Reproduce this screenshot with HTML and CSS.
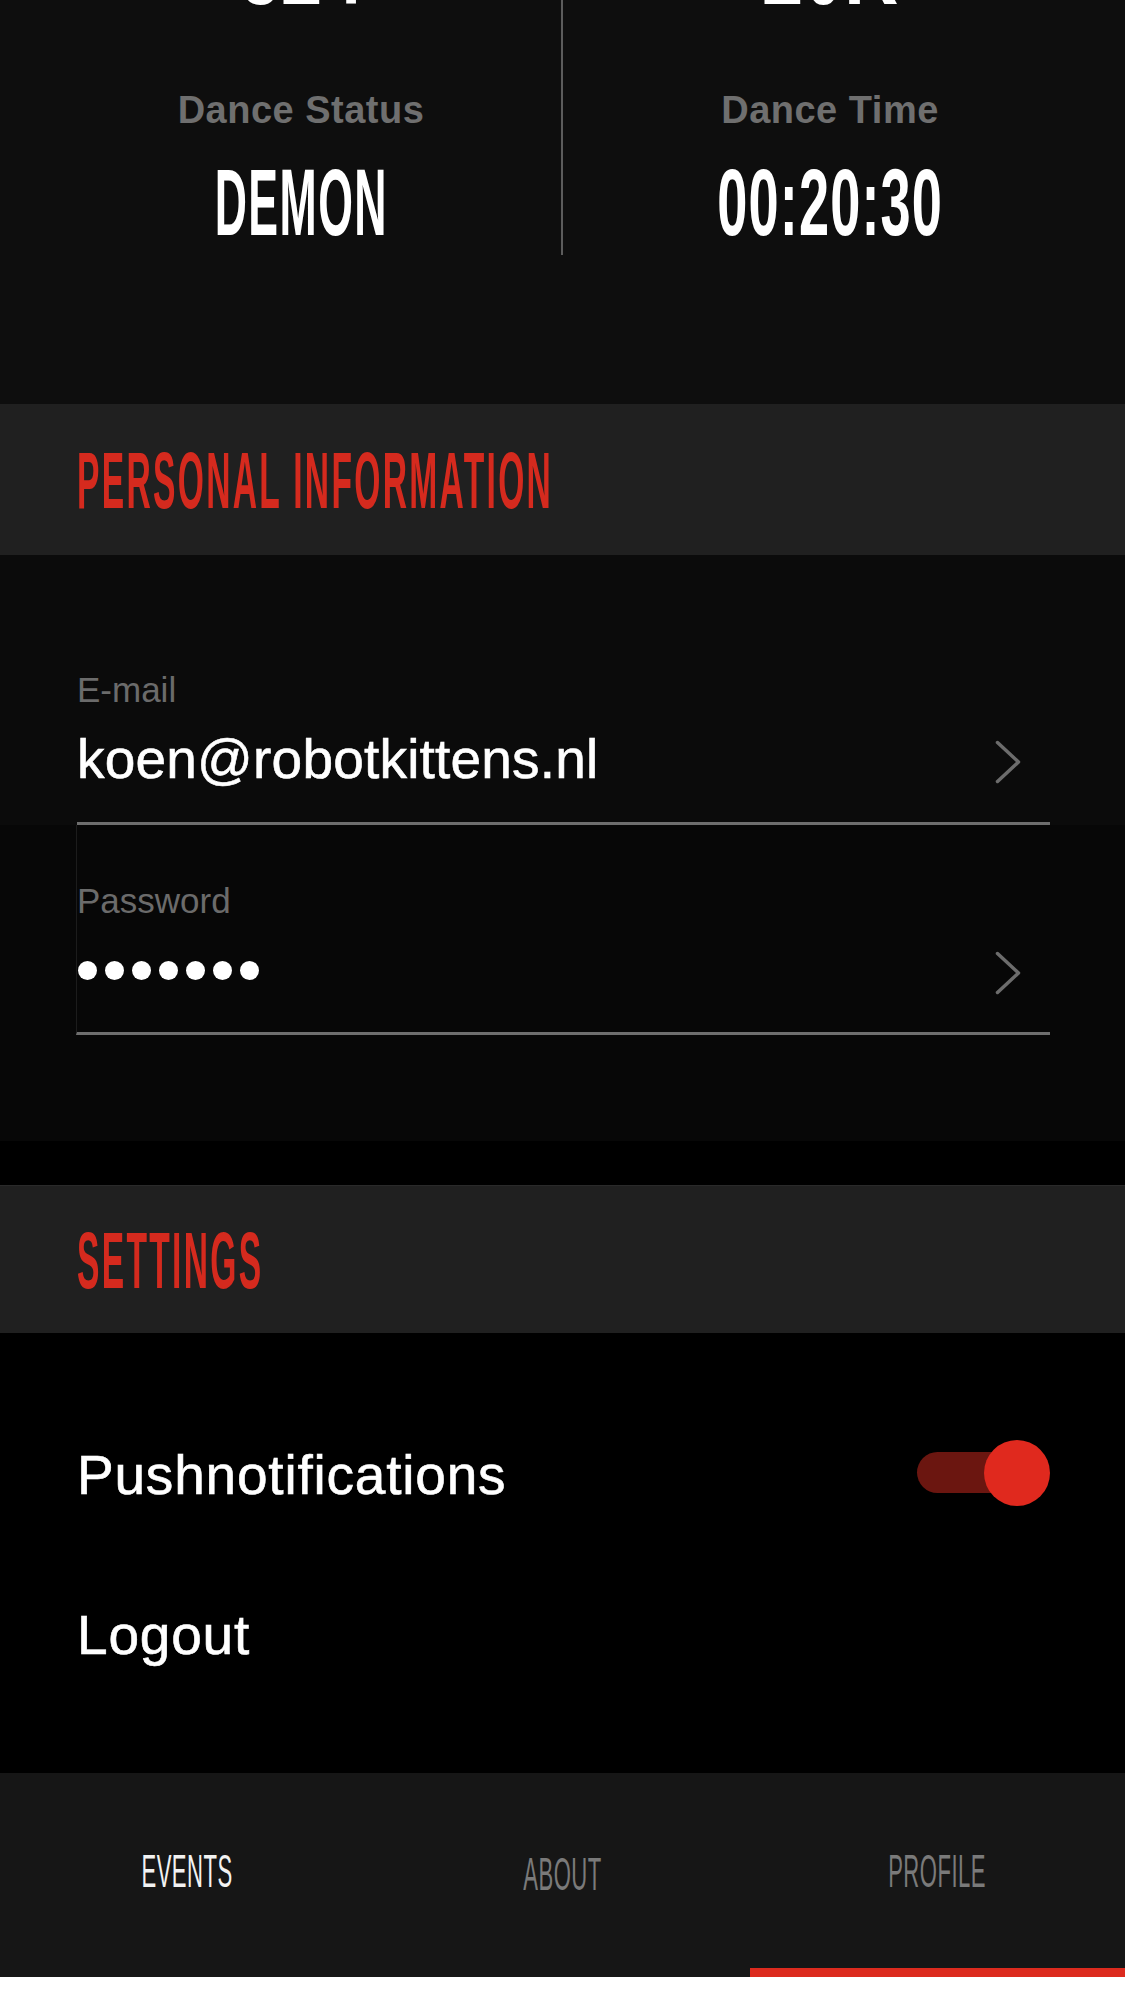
FILE: index.html
```html
<!DOCTYPE html>
<html lang="en">
<head>
<meta charset="utf-8">
<title>Profile</title>
<link rel="stylesheet" href="styles.css">
</head>
<body>
<div class="screen">
  <section class="stats">
    <div class="stat stat-left">
      <div class="stat-num">324</div>
      <div class="stat-label">Dance Status</div>
      <div class="stat-value">DEMON</div>
    </div>
    <div class="stat stat-right">
      <div class="stat-num">20K</div>
      <div class="stat-label">Dance Time</div>
      <div class="stat-value is-time">00:20:30</div>
    </div>
  </section>

  <header class="section-head">
    <h2 class="section-title">PERSONAL INFORMATION</h2>
  </header>

  <section class="info">
    <div class="row row-email">
      <div class="field">
        <div class="field-label">E-mail</div>
        <div class="field-row">
          <span class="field-value">koen@robotkittens.nl</span>
          <svg class="chevron" viewBox="0 0 26 44" aria-hidden="true"><path d="M2.5 2.5 L23.5 22 L2.5 41.5" fill="none" stroke="#6c6c6c" stroke-width="3.5" stroke-linecap="round" stroke-linejoin="round"/></svg>
        </div>
      </div>
    </div>
    <div class="row row-pass">
      <div class="field field-pass">
        <div class="field-label">Password</div>
        <div class="field-row">
          <span class="dots" aria-label="password hidden"><i class="dot"></i><i class="dot"></i><i class="dot"></i><i class="dot"></i><i class="dot"></i><i class="dot"></i><i class="dot"></i></span>
          <svg class="chevron" viewBox="0 0 26 44" aria-hidden="true"><path d="M2.5 2.5 L23.5 22 L2.5 41.5" fill="none" stroke="#6c6c6c" stroke-width="3.5" stroke-linecap="round" stroke-linejoin="round"/></svg>
        </div>
      </div>
    </div>
  </section>

  <div class="band"></div>

  <header class="section-head settings-head">
    <h2 class="section-title">SETTINGS</h2>
  </header>

  <section class="settings">
    <div class="setting-row">
      <span class="setting-text">Pushnotifications</span>
      <span class="toggle" role="switch" aria-checked="true"><span class="toggle-track"></span><span class="toggle-knob"></span></span>
    </div>
    <div class="setting-row logout">
      <span class="setting-text">Logout</span>
    </div>
  </section>

  <nav class="tabbar">
    <div class="tab is-current"><span class="tab-label">EVENTS</span></div>
    <div class="tab tab-about"><span class="tab-label">ABOUT</span></div>
    <div class="tab is-active"><span class="tab-label">PROFILE</span></div>
  </nav>
</div>
</body>
</html>
```

FILE: styles.css
```css
* { box-sizing: border-box; }

html, body {
  margin: 0;
  padding: 0;
  background: #ffffff;
}

body {
  font-family: "Liberation Sans", Arial, sans-serif;
}

.screen {
  width: 1125px;
  height: 1977px;
  background: #000;
  overflow: hidden;
}

/* ---------- stats ---------- */
.stats {
  height: 404px;
  background: #0e0e0e;
  display: grid;
  grid-template-columns: 563px 1fr;
  align-items: start;
}

.stat {
  display: flex;
  flex-direction: column;
  align-items: center;
  height: 255px;
}

.stat-left {
  padding-left: 41px;
  border-right: 2px solid #5c5c5c;
}

.stat-right {
  padding-right: 28px;
}

.stat-num {
  font-weight: 700;
  font-size: 112px;
  line-height: 112px;
  margin-top: -90px;
  color: #fff;
  transform: scaleX(.66);
  white-space: nowrap;
}

.stat-label {
  font-weight: 700;
  font-size: 38px;
  line-height: 38px;
  letter-spacing: .5px;
  color: #6f6f6f;
  margin-top: 69px;
  white-space: nowrap;
}

.stat-value {
  font-weight: 700;
  font-size: 95px;
  line-height: 95px;
  letter-spacing: 3px;
  color: #fff;
  margin-top: 26px;
  transform: scaleX(.47);
  white-space: nowrap;
}

.stat-value.is-time {
  letter-spacing: 2px;
  transform: scaleX(.57);
}

/* ---------- section headers ---------- */
.section-head {
  background: #202020;
  height: 151px;
  padding: 37px 77px 0;
}

.settings-head {
  height: 148px;
  padding-top: 35px;
  border-top: 1px solid #2a2a2a;
}

.section-title {
  margin: 0;
  font-weight: 700;
  font-size: 80px;
  line-height: 80px;
  letter-spacing: 5.5px;
  color: #d52a1e;
  white-space: nowrap;
  transform: scaleX(.42);
  transform-origin: left center;
}

/* ---------- personal info ---------- */
.info {
  height: 586px;
  background: #070707;
}

.row {
  padding: 0 75px 0 77px;
}

.row-email {
  background: #0b0b0b;
  padding-top: 117px;
}

.field {
  padding-bottom: 35px;
  border-bottom: 3px solid #6e6e6e;
}

.field-pass {
  margin-left: -1px;
  border-left: 1px solid #1c1c1c;
  padding-top: 58px;
  padding-bottom: 34px;
}

.field-label {
  font-size: 35px;
  line-height: 35px;
  color: #6b6b6b;
}

.field-row {
  display: flex;
  align-items: center;
  justify-content: space-between;
  height: 55px;
  margin-top: 25px;
}

.field-value {
  font-size: 55px;
  line-height: 55px;
  letter-spacing: .2px;
  color: #fff;
  -webkit-text-stroke: .6px #fff;
  white-space: nowrap;
}

.chevron {
  width: 26px;
  height: 44px;
  margin-right: 29px;
  margin-top: 5px;
  flex: none;
}

.dots {
  display: flex;
  gap: 8px;
  padding-left: 1px;
}

.dot {
  display: block;
  width: 19px;
  height: 19px;
  border-radius: 50%;
  background: #fff;
}

.band {
  height: 44px;
  background: #000;
}

/* ---------- settings ---------- */
.settings {
  height: 440px;
  background: #000;
  padding: 115px 75px 0 77px;
}

.setting-row {
  display: flex;
  align-items: center;
  justify-content: space-between;
  height: 55px;
}

.setting-text {
  font-size: 55px;
  line-height: 55px;
  letter-spacing: .8px;
  color: #fff;
  -webkit-text-stroke: .6px #fff;
  white-space: nowrap;
}

.logout {
  margin-top: 105px;
}

.toggle {
  position: relative;
  display: block;
  width: 133px;
  height: 66px;
  margin-bottom: 5px;
  flex: none;
}

.toggle-track {
  position: absolute;
  left: 0;
  top: 12px;
  width: 123px;
  height: 41px;
  border-radius: 21px;
  background: #6b1610;
}

.toggle-knob {
  position: absolute;
  right: 0;
  top: 0;
  width: 66px;
  height: 66px;
  border-radius: 50%;
  background: #e0291e;
}

/* ---------- tab bar ---------- */
.tabbar {
  display: grid;
  grid-template-columns: repeat(3, 1fr);
  height: 204px;
  background: #161616;
}

.tab {
  display: flex;
  justify-content: center;
  align-items: flex-start;
  padding-top: 74px;
}

.tab-about {
  padding-top: 77px;
}

.tab.is-active {
  border-bottom: 9px solid #dc2a1e;
}

.tab-label {
  display: block;
  font-size: 47px;
  line-height: 47px;
  letter-spacing: 1px;
  color: #7a7a7a;
  transform: scaleX(.47);
  white-space: nowrap;
}

.tab.is-current .tab-label {
  color: #f2f2f2;
}
```
